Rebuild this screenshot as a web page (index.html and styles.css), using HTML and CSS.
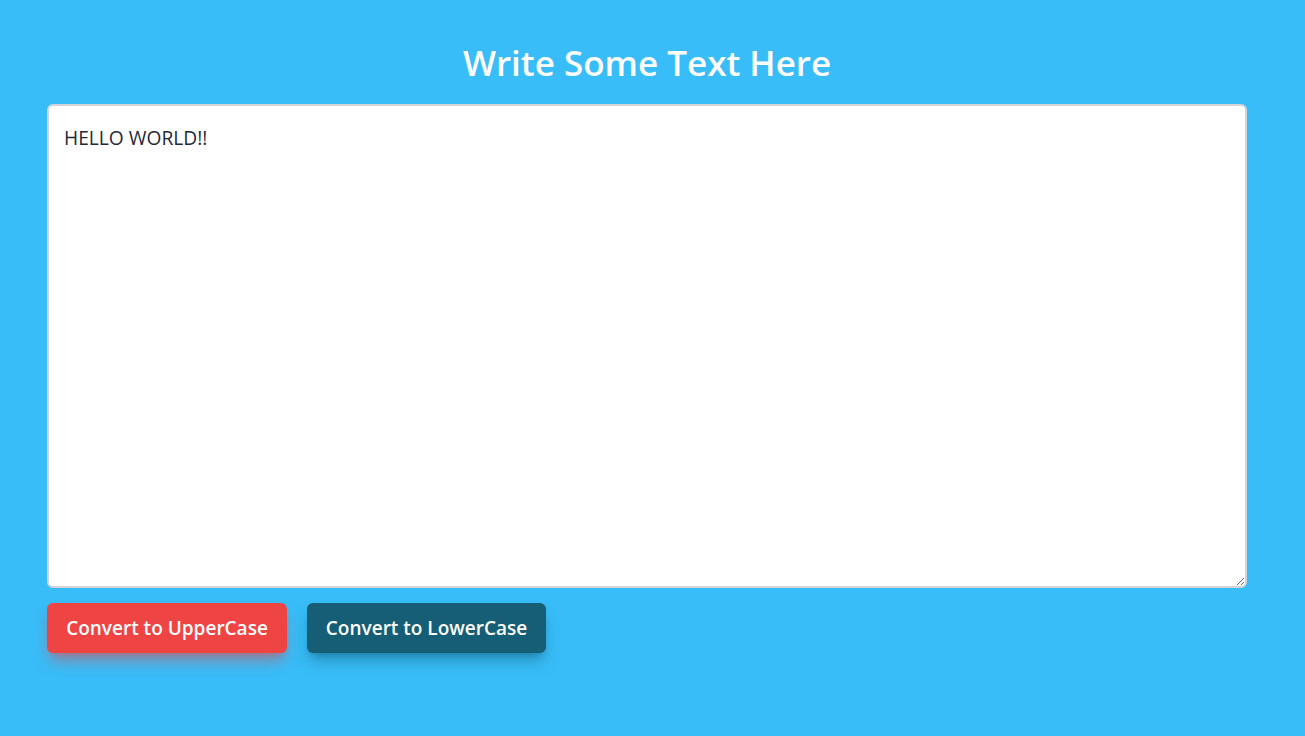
FILE: index.html
```html
<!DOCTYPE html>
<html lang="en">
<head>
<meta charset="utf-8">
<title>Text Utils</title>
<link rel="stylesheet" href="styles.css">
</head>
<body>
<main class="app">
  <h1 class="title">Write Some Text Here</h1>
  <textarea class="editor">HELLO WORLD!!</textarea>
  <div class="actions">
    <button class="btn btn-upper">Convert to UpperCase</button>
    <button class="btn btn-lower">Convert to LowerCase</button>
  </div>
</main>
</body>
</html>
```
FILE: styles.css
```css
html, body {
  margin: 0;
  padding: 0;
}
body {
  background: #38bdf8;
  font-family: "Open Sans", "Noto Sans", sans-serif;
  min-height: 736px;
}
.app {
  width: 1200px;
  margin-left: 47px;
  padding-top: 39px;
  display: flex;
  flex-direction: column;
}
.title {
  margin: 0 0 17px;
  text-align: center;
  color: #ffffff;
  font-size: 35px;
  font-weight: 600;
  line-height: 48px;
}
.editor {
  box-sizing: border-box;
  width: 1200px;
  height: 484px;
  border: 2px solid #d4d4d8;
  border-radius: 6px;
  padding: 18px 15px;
  font-family: "Open Sans", "Noto Sans", sans-serif;
  font-size: 19.2px;
  line-height: 28px;
  color: #1f2937;
  background: #ffffff;
  resize: both;
  outline: none;
  margin: 0;
  display: block;
}
.actions {
  display: flex;
  gap: 20px;
  margin-top: 15px;
}
.btn {
  height: 50px;
  border: none;
  border-radius: 6px;
  padding: 0 10px;
  color: #ffffff;
  font-family: "Open Sans", "Noto Sans", sans-serif;
  font-size: 19px;
  font-weight: 600;
  cursor: pointer;
}
.btn-upper {
  width: 240px;
  background: #ef4444;
  box-shadow: 0 10px 15px -3px rgba(239, 68, 68, 0.5), 0 4px 6px -4px rgba(239, 68, 68, 0.5);
}
.btn-lower {
  width: 239px;
  background: #155e75;
  box-shadow: 0 10px 15px -3px rgba(21, 94, 117, 0.5), 0 4px 6px -4px rgba(21, 94, 117, 0.5);
}
```
